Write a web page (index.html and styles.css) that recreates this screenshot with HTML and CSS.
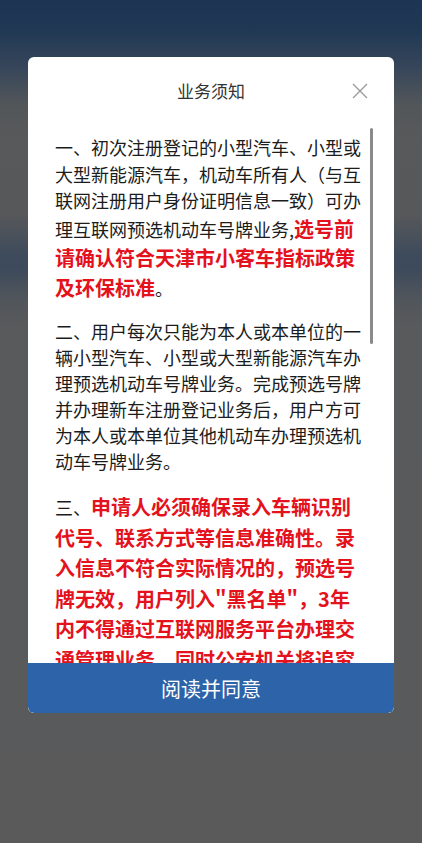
FILE: index.html
```html
<!DOCTYPE html>
<html lang="zh-CN">
<head>
<meta charset="utf-8">
<title>业务须知</title>
<link rel="stylesheet" href="styles.css">
</head>
<body>
<div class="modal">
  <div class="modal-header">
    <div class="modal-title">业务须知</div>
    <button class="close" aria-label="关闭">
      <svg width="16" height="16" viewBox="0 0 16 16"><path d="M1 1L15 15M15 1L1 15" stroke="#9a9a9a" stroke-width="1.4" fill="none"/></svg>
    </button>
  </div>
  <div class="modal-body">
    <p class="first">一、初次注册登记的小型汽车、小型或大型新能源汽车，机动车所有人（与互联网注册用户身份证明信息一致）可办理互联网预选机动车号牌业务,<span class="red">选号前请确认符合天津市小客车指标政策及环保标准</span>。</p>
    <p class="second">二、用户每次只能为本人或本单位的一辆小型汽车、小型或大型新能源汽车办理预选机动车号牌业务。完成预选号牌并办理新车注册登记业务后，用户方可为本人或本单位其他机动车办理预选机动车号牌业务。</p>
    <p>三、<span class="red">申请人必须确保录入车辆识别代号、联系方式等信息准确性。录入信息不符合实际情况的，预选号牌无效，用户列入"黑名单"，3年内不得通过互联网服务平台办理交通管理业务，同时公安机关将追究其法律责任。</span></p>
    <p>四、预选号牌在有效期内未办理注册登记的，预选号牌作废。</p>
  </div>
  <div class="scrollbar"></div>
  <button class="agree">阅读并同意</button>
</div>
</body>
</html>
```
FILE: styles.css
```css
html, body {
  margin: 0;
  padding: 0;
}
body {
  width: 422px;
  height: 843px;
  overflow: hidden;
  font-family: "Noto Sans CJK SC", "Noto Sans", sans-serif;
  background: linear-gradient(to bottom,
    #1d3553 0px,
    #203854 30px,
    #38475a 70px,
    #525659 105px,
    #58595a 140px,
    #56585a 215px,
    #3e4b5c 255px,
    #3d4a5b 268px,
    #51565b 300px,
    #595a5b 330px,
    #5a5a5b 843px);
  padding-top: 57px;
  box-sizing: border-box;
}
.modal {
  position: relative;
  width: 366px;
  height: 656px;
  margin-left: 28px;
  background: #fff;
  border-radius: 6px;
  overflow: hidden;
  display: flex;
  flex-direction: column;
}
.modal-header {
  position: relative;
  height: 58px;
  flex: none;
  box-sizing: border-box;
  padding-top: 21px;
}
.modal-title {
  text-align: center;
  font-size: 17px;
  line-height: 26px;
  color: #333;
}
.close {
  position: absolute;
  top: 26px;
  right: 26px;
  width: 16px;
  height: 16px;
  padding: 0;
  border: 0;
  background: none;
  display: flex;
}
.modal-body {
  flex: 1;
  overflow: hidden;
  padding: 19px 31px 0 27px;
}
.modal-body p {
  margin: 0 0 16px;
  font-size: 18px;
  line-height: 26px;
  color: #1c1c1c;
}
.modal-body p.first {
  line-height: 26.5px;
  margin-bottom: 16px;
}
.modal-body p.second {
  margin-bottom: 18px;
}
.red {
  color: #e3121c;
  font-weight: 700;
  font-size: 20px;
  line-height: 30.5px;
}
.first .red {
  line-height: 29.5px;
}
.scrollbar {
  position: absolute;
  left: 342px;
  top: 71px;
  width: 3px;
  height: 216px;
  border-radius: 2px;
  background: #8a8a8a;
}
.agree {
  flex: none;
  height: 50px;
  border: 0;
  margin: 0;
  background: #2d63a8;
  color: #fff;
  font-family: "Noto Sans CJK SC", "Noto Sans", sans-serif;
  font-size: 20px;
  border-radius: 0 0 6px 6px;
}
```
